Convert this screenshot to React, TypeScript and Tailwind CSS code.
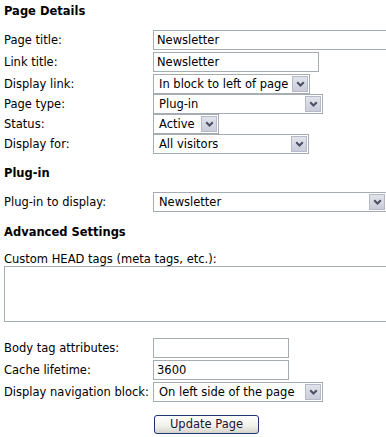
import React from "react";

const font = { fontFamily: '"DejaVu Sans", Verdana, sans-serif' };

function Chevron() {
  return (
    <svg width="9" height="6" viewBox="0 0 9 6">
      <path d="M1.2 1.2 L4.5 4.5 L7.8 1.2" fill="none" stroke="#4a4f63" strokeWidth="2" />
    </svg>
  );
}

function Select({ value, width, className = "" }: { value: string; width: string; className?: string }) {
  return (
    <div className={`flex h-[20px] items-stretch border border-[#a5acb2] bg-white ${width} ${className}`}>
      <div className="flex flex-1 items-center overflow-hidden whitespace-nowrap pl-[5px] pt-[1px] text-black">{value}</div>
      <div className="m-[1px] flex w-[16px] items-center justify-center border border-[#b5b9c9] bg-[linear-gradient(#e2e4ec,#c9ccd9)]">
        <Chevron />
      </div>
    </div>
  );
}

function TextInput({ value = "", width }: { value?: string; width: string }) {
  return (
    <div className={`flex h-[20px] items-center border border-[#a5acb2] bg-white pl-[3px] pt-[1px] text-black whitespace-nowrap ${width}`}>
      {value}
    </div>
  );
}

function Row({ label, children, h = "h-[22px]" }: { label: string; children: React.ReactNode; h?: string }) {
  return (
    <div className={`flex items-start ${h}`}>
      <div className="flex h-[20px] w-[149px] shrink-0 items-center whitespace-nowrap pt-[2px]">{label}</div>
      {children}
    </div>
  );
}

function Heading({ children, className = "" }: { children: React.ReactNode; className?: string }) {
  return <div className={`flex h-[20px] items-center pt-[2px] font-bold ${className}`}>{children}</div>;
}

export default function App() {
  return (
    <div className="h-[437px] w-[386px] overflow-hidden bg-white pl-[4px] pt-[1px] text-[11.5px] text-black" style={font}>
      <Heading>Page Details</Heading>

      <div className="mt-[9px]">
        <Row label="Page title:">
          <TextInput value="Newsletter" width="w-[300px] shrink-0" />
        </Row>
        <Row label="Link title:">
          <TextInput value="Newsletter" width="w-[166px]" />
        </Row>
        <Row label="Display link:" h="h-[20px]">
          <Select value="In block to left of page" width="w-[157px]" />
        </Row>
        <Row label="Page type:" h="h-[20px]">
          <Select value="Plug-in" width="w-[170px]" />
        </Row>
        <Row label="Status:" h="h-[20px]">
          <Select value="Active" width="w-[66px]" />
        </Row>
        <Row label="Display for:" h="h-[20px]">
          <Select value="All visitors" width="w-[156px]" />
        </Row>
      </div>

      <Heading className="mt-[9px]">Plug-in</Heading>

      <div className="mt-[9px]">
        <Row label="Plug-in to display:" h="h-[20px]">
          <Select value="Newsletter" width="w-[234px] shrink-0" />
        </Row>
      </div>

      <Heading className="mt-[10px]">Advanced Settings</Heading>

      <div className="mt-[10px] h-[14px] whitespace-nowrap leading-[14px]">Custom HEAD tags (meta tags, etc.):</div>
      <div className="h-[56px] w-[400px] shrink-0 border border-[#a5acb2] bg-white" />

      <div className="mt-[16px]">
        <Row label="Body tag attributes:">
          <TextInput width="w-[136px]" />
        </Row>
        <Row label="Cache lifetime:">
          <TextInput value="3600" width="w-[136px]" />
        </Row>
        <Row label="Display navigation block:" h="h-[20px]">
          <Select value="On left side of the page" width="w-[170px]" />
        </Row>
      </div>

      <div className="mt-[13px] pl-[150px]">
        <button className="flex h-[19px] w-[105px] items-center justify-center rounded-[3px] border border-[#1e3770] bg-[linear-gradient(#ffffff,#f0f0ea_60%,#d6d4cc)] text-[11.5px] text-[#1a1438]" style={font}>
          Update Page
        </button>
      </div>
    </div>
  );
}
